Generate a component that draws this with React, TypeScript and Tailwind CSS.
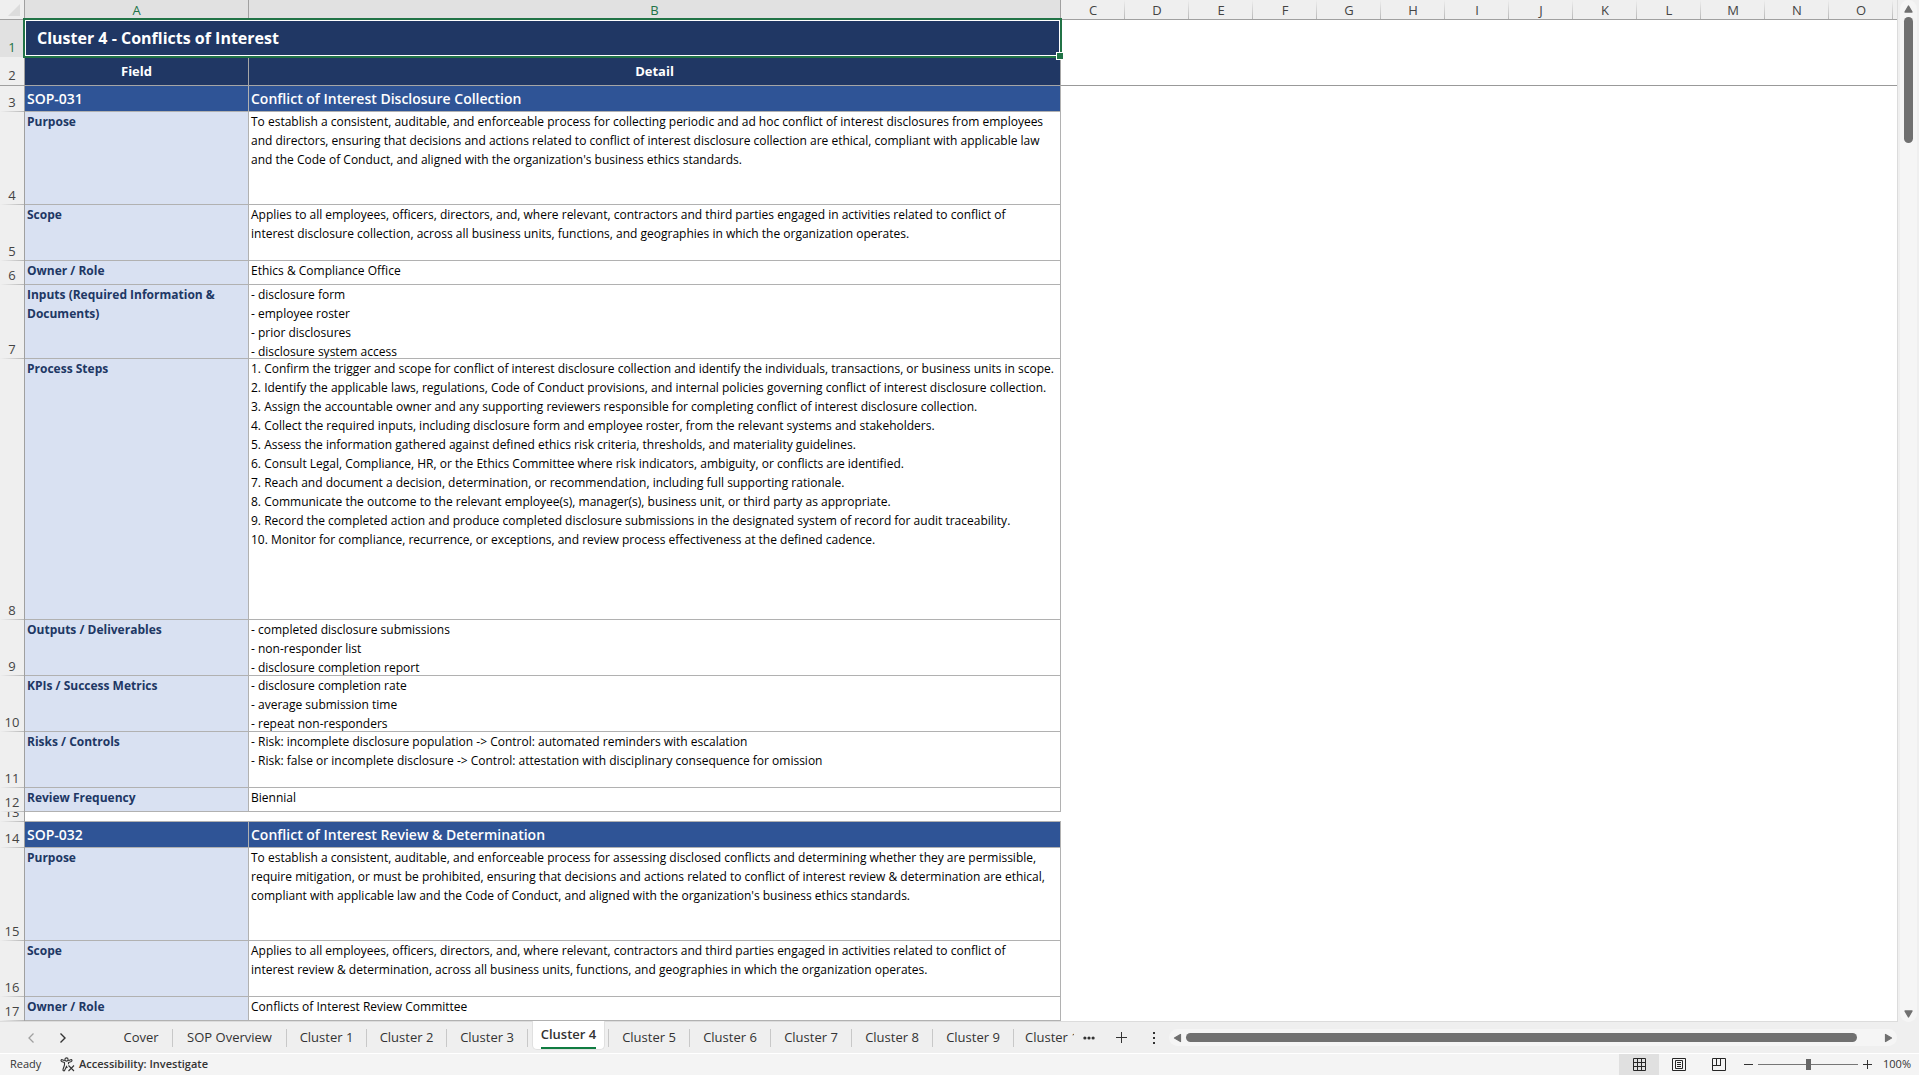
import React from "react";

type RowKind = "title" | "header" | "section" | "field" | "gap";

interface SheetRow {
  n: number;
  kind: RowKind;
  height: string;
  a?: string[];
  b?: string[];
}

const rows: SheetRow[] = [
  { n: 1, kind: "title", height: "h-[37px]", a: ["Cluster 4 - Conflicts of Interest"] },
  { n: 2, kind: "header", height: "h-[29px]", a: ["Field"], b: ["Detail"] },
  { n: 3, kind: "section", height: "h-[26px]", a: ["SOP-031"], b: ["Conflict of Interest Disclosure Collection"] },
  {
    n: 4,
    kind: "field",
    height: "h-[93px]",
    a: ["Purpose"],
    b: [
      "To establish a consistent, auditable, and enforceable process for collecting periodic and ad hoc conflict of interest disclosures from employees",
      "and directors, ensuring that decisions and actions related to conflict of interest disclosure collection are ethical, compliant with applicable law",
      "and the Code of Conduct, and aligned with the organization's business ethics standards.",
    ],
  },
  {
    n: 5,
    kind: "field",
    height: "h-[56px]",
    a: ["Scope"],
    b: [
      "Applies to all employees, officers, directors, and, where relevant, contractors and third parties engaged in activities related to conflict of",
      "interest disclosure collection, across all business units, functions, and geographies in which the organization operates.",
    ],
  },
  { n: 6, kind: "field", height: "h-[24px]", a: ["Owner / Role"], b: ["Ethics & Compliance Office"] },
  {
    n: 7,
    kind: "field",
    height: "h-[74px]",
    a: ["Inputs (Required Information &", "Documents)"],
    b: ["- disclosure form", "- employee roster", "- prior disclosures", "- disclosure system access"],
  },
  {
    n: 8,
    kind: "field",
    height: "h-[261px]",
    a: ["Process Steps"],
    b: [
      "1. Confirm the trigger and scope for conflict of interest disclosure collection and identify the individuals, transactions, or business units in scope.",
      "2. Identify the applicable laws, regulations, Code of Conduct provisions, and internal policies governing conflict of interest disclosure collection.",
      "3. Assign the accountable owner and any supporting reviewers responsible for completing conflict of interest disclosure collection.",
      "4. Collect the required inputs, including disclosure form and employee roster, from the relevant systems and stakeholders.",
      "5. Assess the information gathered against defined ethics risk criteria, thresholds, and materiality guidelines.",
      "6. Consult Legal, Compliance, HR, or the Ethics Committee where risk indicators, ambiguity, or conflicts are identified.",
      "7. Reach and document a decision, determination, or recommendation, including full supporting rationale.",
      "8. Communicate the outcome to the relevant employee(s), manager(s), business unit, or third party as appropriate.",
      "9. Record the completed action and produce completed disclosure submissions in the designated system of record for audit traceability.",
      "10. Monitor for compliance, recurrence, or exceptions, and review process effectiveness at the defined cadence.",
    ],
  },
  {
    n: 9,
    kind: "field",
    height: "h-[56px]",
    a: ["Outputs / Deliverables"],
    b: ["- completed disclosure submissions", "- non-responder list", "- disclosure completion report"],
  },
  {
    n: 10,
    kind: "field",
    height: "h-[56px]",
    a: ["KPIs / Success Metrics"],
    b: ["- disclosure completion rate", "- average submission time", "- repeat non-responders"],
  },
  {
    n: 11,
    kind: "field",
    height: "h-[56px]",
    a: ["Risks / Controls"],
    b: [
      "- Risk: incomplete disclosure population -> Control: automated reminders with escalation",
      "- Risk: false or incomplete disclosure -> Control: attestation with disciplinary consequence for omission",
    ],
  },
  { n: 12, kind: "field", height: "h-[24px]", a: ["Review Frequency"], b: ["Biennial"] },
  { n: 13, kind: "gap", height: "h-[10px]" },
  { n: 14, kind: "section", height: "h-[26px]", a: ["SOP-032"], b: ["Conflict of Interest Review & Determination"] },
  {
    n: 15,
    kind: "field",
    height: "h-[93px]",
    a: ["Purpose"],
    b: [
      "To establish a consistent, auditable, and enforceable process for assessing disclosed conflicts and determining whether they are permissible,",
      "require mitigation, or must be prohibited, ensuring that decisions and actions related to conflict of interest review & determination are ethical,",
      "compliant with applicable law and the Code of Conduct, and aligned with the organization's business ethics standards.",
    ],
  },
  {
    n: 16,
    kind: "field",
    height: "h-[56px]",
    a: ["Scope"],
    b: [
      "Applies to all employees, officers, directors, and, where relevant, contractors and third parties engaged in activities related to conflict of",
      "interest review & determination, across all business units, functions, and geographies in which the organization operates.",
    ],
  },
  { n: 17, kind: "field", height: "h-[24px]", a: ["Owner / Role"], b: ["Conflicts of Interest Review Committee"] },
];

const emptyColumns = ["C", "D", "E", "F", "G", "H", "I", "J", "K", "L", "M", "N", "O"];

const cellStyles: Record<RowKind, { a: string; b: string }> = {
  title: {
    a: "flex items-center border-b border-[#b1b1b1] bg-[#203764] pl-3 text-[16px] font-bold text-white",
    b: "",
  },
  header: {
    a: "flex items-center justify-center border-r border-b border-[#a6a6a6] bg-[#203764] pt-0.5 text-[13px] font-bold text-white",
    b: "flex items-center justify-center border-r border-b border-[#a6a6a6] bg-[#203764] pt-0.5 text-[13px] font-bold text-white",
  },
  section: {
    a: "flex items-center border-r border-b border-[#b1b1b1] bg-[#2f5496] pl-0.5 text-[14px] font-semibold text-white",
    b: "flex items-center border-r border-b border-[#b1b1b1] bg-[#2f5496] pl-0.5 text-[14px] font-semibold text-white",
  },
  field: {
    a: "border-r border-b border-[#b1b1b1] bg-[#d9e1f2] pl-0.5 text-[12px] leading-[19px] font-bold text-[#203764]",
    b: "border-r border-b border-[#b1b1b1] bg-white pl-0.5 text-[12px] leading-[19px] text-black",
  },
  gap: {
    a: "border-b border-[#b1b1b1] bg-white",
    b: "border-b border-[#b1b1b1] bg-white",
  },
};

function Lines({ lines = [] }: { lines?: string[] }) {
  return (
    <>
      {lines.map((line) => (
        <p key={line} className="whitespace-pre">
          {line}
        </p>
      ))}
    </>
  );
}

function RowHeader({ row }: { row: SheetRow }) {
  const tone =
    row.n === 1
      ? "bg-[#e1e1e1] text-[#217346]"
      : row.n === 2
        ? "border-b border-[#a0a0a0] bg-[#efefef] text-[#444444]"
        : "bg-[#efefef] bg-[linear-gradient(to_right,#efefef,#b8b8b8)] bg-[length:100%_1px] bg-bottom bg-no-repeat text-[#444444]";
  return (
    <th scope="row" className="p-0 font-normal">
      <div
        className={`flex items-end justify-center overflow-hidden border-r border-r-[#a0a0a0] text-[13px] leading-[20px] ${row.height} ${tone}`}
      >
        {row.n}
      </div>
    </th>
  );
}

function Sheet() {
  return (
    <table className="w-full table-fixed border-separate border-spacing-0 text-left">
      <colgroup>
        <col className="w-[25px]" />
        <col className="w-[224px]" />
        <col className="w-[812px]" />
        {emptyColumns.map((c) => (
          <col key={c} className="w-[64px]" />
        ))}
        <col />
      </colgroup>
      <thead>
        <tr className="h-5 text-[13px] leading-[18px] text-[#444444]">
          <th className="border-r border-b border-[#a0a0a0] bg-[#efefef] p-0" aria-label="Select all">
            <svg viewBox="0 0 12 12" className="ml-2 size-3" aria-hidden="true">
              <path d="M12 0V12H0Z" fill="#dcdcdc" />
            </svg>
          </th>
          {["A", "B"].map((c) => (
            <th
              key={c}
              scope="col"
              className="border-r border-b border-[#a0a0a0] bg-[#e1e1e1] p-0 pt-px text-center font-normal text-[#217346]"
            >
              {c}
            </th>
          ))}
          {emptyColumns.map((c) => (
            <th
              key={c}
              scope="col"
              className="border-b border-[#a0a0a0] bg-[#efefef] bg-[linear-gradient(to_bottom,#efefef,#b8b8b8)] bg-[length:1px_100%] bg-right bg-no-repeat p-0 pt-px text-center font-normal"
            >
              {c}
            </th>
          ))}
          <th className="border-b border-[#a0a0a0] bg-[#efefef] p-0" />
        </tr>
      </thead>
      <tbody>
        {rows.map((row) => (
          <tr key={row.n}>
            <RowHeader row={row} />
            {row.kind === "title" ? (
              <td colSpan={2} className="relative p-0">
                <div className={`${row.height} ${cellStyles.title.a}`}>
                  <Lines lines={row.a} />
                </div>
                <div className="pointer-events-none absolute -top-0.5 -right-px -bottom-px -left-0.5 border-2 border-[#217346]">
                  <div className="h-full border border-white" />
                  <div className="absolute -right-[3px] -bottom-[3px] size-[6px] bg-[#217346] outline outline-white" />
                </div>
              </td>
            ) : (
              <>
                <td className="p-0">
                  <div className={`overflow-hidden ${row.height} ${cellStyles[row.kind].a}`}>
                    <Lines lines={row.a} />
                  </div>
                </td>
                <td className="p-0">
                  <div className={`overflow-hidden ${row.height} ${cellStyles[row.kind].b}`}>
                    <Lines lines={row.b} />
                  </div>
                </td>
              </>
            )}
            <td
              colSpan={emptyColumns.length + 1}
              className={row.n === 2 ? "border-b border-[#999999] p-0" : "p-0"}
            />
          </tr>
        ))}
      </tbody>
    </table>
  );
}

function Arrow({ className }: { className: string }) {
  return (
    <svg viewBox="0 0 9 8" className={`h-2 w-[9px] ${className}`} aria-hidden="true">
      <path d="M4.5 1 8 7H1Z" fill="#707070" stroke="#707070" strokeWidth="1.4" strokeLinejoin="round" />
    </svg>
  );
}

function VerticalScrollbar() {
  return (
    <div className="flex w-[21px] shrink-0 justify-center bg-[#efefef] pr-px">
      <div className="flex w-[17px] flex-col items-center rounded-full bg-[#f5f5f5]">
        <button aria-label="Scroll up" className="flex h-[17px] items-center">
          <Arrow className="" />
        </button>
        <div className="h-[126px] w-[9px] rounded-full bg-[#707070]" />
        <div className="flex-1" />
        <button aria-label="Scroll down" className="flex h-[17px] items-center">
          <Arrow className="rotate-180" />
        </button>
      </div>
    </div>
  );
}

interface Tab {
  label: string;
  width: string;
}

const tabs: Tab[] = [
  { label: "Cover", width: "w-[63px]" },
  { label: "SOP Overview", width: "w-[114px]" },
  { label: "Cluster 1", width: "w-[80px]" },
  { label: "Cluster 2", width: "w-[80px]" },
  { label: "Cluster 3", width: "w-[81px]" },
  { label: "Cluster 4", width: "w-[81px]" },
  { label: "Cluster 5", width: "w-[81px]" },
  { label: "Cluster 6", width: "w-[81px]" },
  { label: "Cluster 7", width: "w-[81px]" },
  { label: "Cluster 8", width: "w-[81px]" },
  { label: "Cluster 9", width: "w-[81px]" },
];

function TabBar() {
  return (
    <div className="flex h-8 shrink-0 border-b border-white bg-[#efefef] text-[13px] text-[#333333]">
      <div className="flex w-[110px] shrink-0 items-center pl-[15px]">
        <button aria-label="Previous sheets" className="flex w-8 justify-center">
          <svg viewBox="0 0 8 12" className="h-3 w-2" aria-hidden="true">
            <path d="M6.5 1.5 2 6l4.500 4.500" fill="none" stroke="#a0a0a0" strokeWidth="1.300" />
          </svg>
        </button>
        <button aria-label="Next sheets" className="flex w-8 justify-center">
          <svg viewBox="0 0 8 12" className="h-3 w-2" aria-hidden="true">
            <path d="M1.500 1.500 6 6l-4.500 4.500" fill="none" stroke="#333333" strokeWidth="1.400" />
          </svg>
        </button>
      </div>
      <div className="flex shrink-0" role="tablist">
        {tabs.map((tab) =>
          tab.label === "Cluster 4" ? (
            <div key={tab.label} className={`flex items-center justify-between pl-1 ${tab.width}`}>
              <button
                role="tab"
                aria-selected="true"
                className="-mt-px flex h-[29px] w-[73px] justify-center self-start rounded-b-[5px] border border-t-0 border-[#e0e0e0] bg-white"
              >
                <span className="mt-[3px] block border-b-2 border-[#107c41] leading-[21px] font-semibold whitespace-nowrap">
                  {tab.label}
                </span>
              </button>
              <span className="h-[18px] w-px bg-[#c8c8c8]" />
            </div>
          ) : (
            <div key={tab.label} className={`flex items-center ${tab.width}`}>
              <button role="tab" aria-selected="false" className="flex-1 whitespace-nowrap">
                {tab.label}
              </button>
              <span className="h-[18px] w-px bg-[#c8c8c8]" />
            </div>
          ),
        )}
        <button role="tab" aria-selected="false" className="w-[60px] overflow-hidden pl-[11px] text-left whitespace-nowrap">
          Cluster 10
        </button>
      </div>
      <button aria-label="More sheets" className="flex w-[30px] items-center justify-center">
        <svg viewBox="0 0 12 4" className="h-1 w-3" aria-hidden="true">
          <g fill="#333333">
            <circle cx="1.900" cy="2" r="1.600" />
            <circle cx="6" cy="2" r="1.600" />
            <circle cx="10.100" cy="2" r="1.600" />
          </g>
        </svg>
      </button>
      <button aria-label="New sheet" className="flex w-[35px] items-center justify-center">
        <svg viewBox="0 0 11 11" className="size-[11px]" aria-hidden="true">
          <path d="M5.500 0V11M0 5.500H11" stroke="#333333" fill="none" />
        </svg>
      </button>
      <span className="flex w-[30px] flex-col items-center justify-center gap-[3px] pt-px" aria-hidden="true">
        <i className="size-0.5 bg-[#333333]" />
        <i className="size-0.5 bg-[#333333]" />
        <i className="size-0.5 bg-[#333333]" />
      </span>
      <div className="mr-[22px] flex h-[17px] flex-1 items-center self-center rounded-full bg-[#f5f5f5]">
        <button aria-label="Scroll left" className="flex w-[17px] justify-center">
          <Arrow className="-rotate-90" />
        </button>
        <div className="mr-[23px] h-[9px] flex-1 rounded-full bg-[#707070]" />
        <button aria-label="Scroll right" className="flex w-[17px] justify-center">
          <Arrow className="rotate-90" />
        </button>
      </div>
    </div>
  );
}

function StatusBar() {
  return (
    <footer className="flex h-[21px] shrink-0 items-center bg-[#f4f4f4] text-[11px] text-[#333333]">
      <span className="w-[60px] pl-2.5">Ready</span>
      <button className="flex items-center gap-1 font-semibold whitespace-nowrap">
        <svg viewBox="0 0 15 15" className="size-[15px]" fill="none" stroke="#333333" strokeWidth="1.100" aria-hidden="true">
          <circle cx="6.500" cy="2.500" r="1.600" />
          <path d="M4.800 3.700 2.300 2.700C1 2.300.500 3.900 1.600 4.400L4.500 5.600V8L3 12.500C2.700 14 4.300 14.300 4.700 13.200L6.500 9.500 7.300 11" />
          <path d="M8.200 3.700 10.700 2.700C12 2.300 12.500 3.900 11.400 4.400L8.500 5.600V7.300" />
          <path d="M8.500 8.500 14 14M14 8.500 8.500 14" />
        </svg>
        Accessibility: Investigate
      </button>
      <div className="ml-auto flex h-full items-center">
        <button aria-label="Normal view" className="flex h-full w-10 items-center justify-center bg-[#e0e0e0]">
          <svg viewBox="0 0 13 13" className="size-[13px]" fill="none" stroke="#262626" aria-hidden="true">
            <path d="M.5.500H12.500V12.500H.5ZM4.500 0V13M8.500 0V13M0 4.500H13M0 8.500H13" />
          </svg>
        </button>
        <button aria-label="Page layout view" className="flex h-full w-10 items-center justify-center">
          <svg viewBox="0 0 14 13" className="h-[13px] w-[14px]" fill="none" stroke="#262626" aria-hidden="true">
            <path d="M.5.500H13.500V12.500H.5ZM3.500 2.500H10.500V10.500H3.500ZM5 4.500H9M5 6.500H9M5 8.500H9" />
          </svg>
        </button>
        <button aria-label="Page break preview" className="flex h-full w-10 items-center justify-center">
          <svg viewBox="0 0 14 13" className="h-[13px] w-[14px]" fill="none" stroke="#262626" aria-hidden="true">
            <path d="M.5.500H13.500V12.500H.5ZM4.500 0V7.500M8.500 0V7.500M0 7.500H9" />
          </svg>
        </button>
        <button aria-label="Zoom out" className="flex w-[19px] items-center justify-center">
          <svg viewBox="0 0 9 9" className="size-[9px]" aria-hidden="true">
            <path d="M0 4.500H9" stroke="#333333" />
          </svg>
        </button>
        <input
          type="range"
          aria-label="Zoom"
          min={10}
          max={190}
          defaultValue={100}
          className="h-[11px] w-[100px] appearance-none bg-[linear-gradient(#767676,#767676)] bg-[length:100%_1px] bg-center bg-no-repeat [&::-webkit-slider-thumb]:h-[11px] [&::-webkit-slider-thumb]:w-[5px] [&::-webkit-slider-thumb]:appearance-none [&::-webkit-slider-thumb]:bg-[#666666]"
        />
        <button aria-label="Zoom in" className="flex w-[18px] items-center justify-center">
          <svg viewBox="0 0 9 9" className="size-[9px]" aria-hidden="true">
            <path d="M0 4.500H9M4.500 0V9" stroke="#333333" />
          </svg>
        </button>
        <button className="w-[43px] pr-2 text-right">100%</button>
      </div>
    </footer>
  );
}

export default function App() {
  return (
    <div className="flex h-screen flex-col overflow-hidden bg-[#efefef] font-['Open_Sans',sans-serif]">
      <div className="flex min-h-0 flex-1">
        <main className="min-w-0 flex-1 overflow-hidden border-r border-b border-[#dcdcdc] bg-white">
          <Sheet />
        </main>
        <VerticalScrollbar />
      </div>
      <TabBar />
      <StatusBar />
    </div>
  );
}
